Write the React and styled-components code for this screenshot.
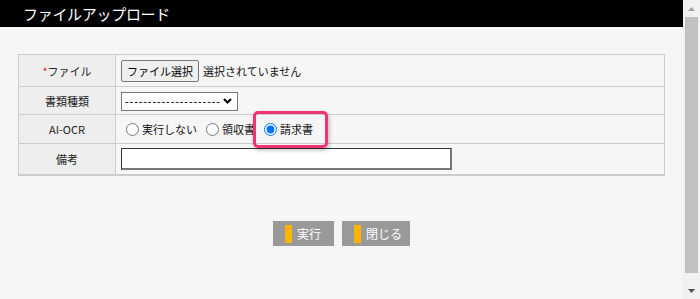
import React from "react";
import styled, { createGlobalStyle } from "styled-components";

const Global = createGlobalStyle`
  html, body { margin: 0; padding: 0; }
  body {
    font-family: "Noto Sans CJK JP", "Noto Sans", sans-serif;
    background: #f6f6f6;
    overflow: hidden;
  }
`;

const Frame = styled.div`
  display: flex;
  width: 700px;
  height: 299px;
`;

const Main = styled.div`
  flex: 1;
  background: #f6f6f6;
  display: flex;
  flex-direction: column;
`;

const Header = styled.div`
  height: 27px;
  background: #000;
  color: #fff;
  font-size: 15px;
  line-height: 27px;
  padding-left: 23px;
  letter-spacing: -0.3px;
`;

const Content = styled.div`
  padding: 27px 18px 0 18px;
`;

const FormTable = styled.div`
  border: 1px solid #cccccc;
  border-bottom-width: 2px;
  display: flex;
  flex-direction: column;
`;

const Row = styled.div`
  box-sizing: border-box;
  display: grid;
  grid-template-columns: 97px 1fr;
  height: ${(p) => p.$h}px;
  border-bottom: ${(p) => (p.$last ? "none" : "1px solid #cccccc")};
`;

const Label = styled.div`
  background: #eeeeee;
  border-right: 1px solid #cccccc;
  display: flex;
  align-items: center;
  justify-content: center;
  font-size: 11px;
  color: #222;
`;

const Required = styled.span`
  color: #e2191b;
`;

const Value = styled.div`
  display: flex;
  align-items: center;
  padding-left: 5px;
  font-size: 11px;
  color: #111;
`;

const FileButton = styled.button`
  height: 22px;
  width: 78px;
  padding: 0;
  background: #efefef;
  border: 1px solid #767676;
  border-radius: 2px;
  font-family: inherit;
  font-size: 11px;
  color: #000;
  margin-right: 4px;
`;

const SelectWrap = styled.span`
  position: relative;
  display: inline-flex;
  margin-top: 1px;
`;

const Select = styled.select`
  appearance: none;
  -webkit-appearance: none;
  width: 117px;
  height: 19px;
  border: 1px solid #767676;
  border-radius: 0;
  background: #fff;
  font-family: "Liberation Sans", sans-serif;
  font-size: 11px;
  letter-spacing: 0.9px;
  padding: 0 0 0 3px;
  color: #000;
  outline: none;
`;

const Chevron = styled.svg`
  position: absolute;
  right: 6px;
  top: 6px;
  pointer-events: none;
`;

const Options = styled.div`
  display: flex;
  align-items: center;
  gap: 4px;
`;

const Option = styled.label`
  position: relative;
  display: inline-flex;
  align-items: center;
  font-size: 11px;
`;

const Radio = styled.input`
  width: 13px;
  height: 13px;
  margin: 0 3px 0 5px;
`;

const Highlight = styled.span`
  position: absolute;
  left: -6px;
  top: 50%;
  margin-top: -18px;
  width: 75px;
  height: 37px;
  box-sizing: border-box;
  border: 3px solid #ef3571;
  border-radius: 5px;
  box-shadow: 1px 2px 4px rgba(0, 0, 0, 0.28);
  pointer-events: none;
`;

const TextInput = styled.input`
  box-sizing: border-box;
  width: 331px;
  height: 22px;
  margin: 0;
  padding: 1px 2px;
  background: #fff;
  border-style: solid;
  border-width: 1px 2px 2px 1px;
  border-color: #333 #767676 #767676 #333;
  outline: none;
`;

const Actions = styled.div`
  display: flex;
  justify-content: center;
  gap: 8px;
  margin-top: 45px;
`;

const ActionButton = styled.button`
  display: flex;
  align-items: center;
  width: ${(p) => p.$w}px;
  height: 25px;
  padding: 0 0 0 12px;
  border: none;
  background: #999999;
  color: #fff;
  font-family: inherit;
  font-size: 12px;
`;

const Bar = styled.span`
  width: 7px;
  height: 18px;
  background: #ffb400;
  margin-right: 5px;
`;

const Scrollbar = styled.div`
  width: 17px;
  background: #f1f1f1;
  display: flex;
  flex-direction: column;
`;

const Arrow = styled.div`
  height: 17px;
  display: flex;
  align-items: center;
  justify-content: center;
`;

const Thumb = styled.div`
  height: 256px;
  margin: 0 2px;
  background: #c1c1c1;
`;

const Track = styled.div`
  flex: 1;
`;

export default function App() {
  return (
    <>
      <Global />
      <Frame>
        <Main>
          <Header>ファイルアップロード</Header>
          <Content>
            <FormTable>
              <Row $h={32}>
                <Label>
                  <Required>*</Required>ファイル
                </Label>
                <Value>
                  <FileButton type="button">ファイル選択</FileButton>
                  選択されていません
                </Value>
              </Row>
              <Row $h={28}>
                <Label>書類種類</Label>
                <Value>
                  <SelectWrap>
                    <Select defaultValue="">
                      <option value="">---------------------</option>
                    </Select>
                    <Chevron width="9" height="6" viewBox="0 0 9 6">
                      <polyline points="1,1 4.5,4.5 8,1" fill="none" stroke="#000" strokeWidth="2" />
                    </Chevron>
                  </SelectWrap>
                </Value>
              </Row>
              <Row $h={29}>
                <Label>AI-OCR</Label>
                <Value>
                  <Options>
                    <Option>
                      <Radio type="radio" name="ocr" value="none" />
                      実行しない
                    </Option>
                    <Option>
                      <Radio type="radio" name="ocr" value="receipt" />
                      領収書
                    </Option>
                    <Option>
                      <Highlight />
                      <Radio type="radio" name="ocr" value="invoice" defaultChecked />
                      請求書
                    </Option>
                  </Options>
                </Value>
              </Row>
              <Row $h={30} $last>
                <Label>備考</Label>
                <Value>
                  <TextInput type="text" />
                </Value>
              </Row>
            </FormTable>
            <Actions>
              <ActionButton type="button" $w={61}>
                <Bar />
                実行
              </ActionButton>
              <ActionButton type="button" $w={68}>
                <Bar />
                閉じる
              </ActionButton>
            </Actions>
          </Content>
        </Main>
        <Scrollbar>
          <Arrow>
            <svg width="7" height="4" viewBox="0 0 7 4">
              <polygon points="0,4 7,4 3.5,0" fill="#a3a3a3" />
            </svg>
          </Arrow>
          <Thumb />
          <Track />
          <Arrow>
            <svg width="7" height="4" viewBox="0 0 7 4">
              <polygon points="0,0 7,0 3.5,4" fill="#505050" />
            </svg>
          </Arrow>
        </Scrollbar>
      </Frame>
    </>
  );
}
